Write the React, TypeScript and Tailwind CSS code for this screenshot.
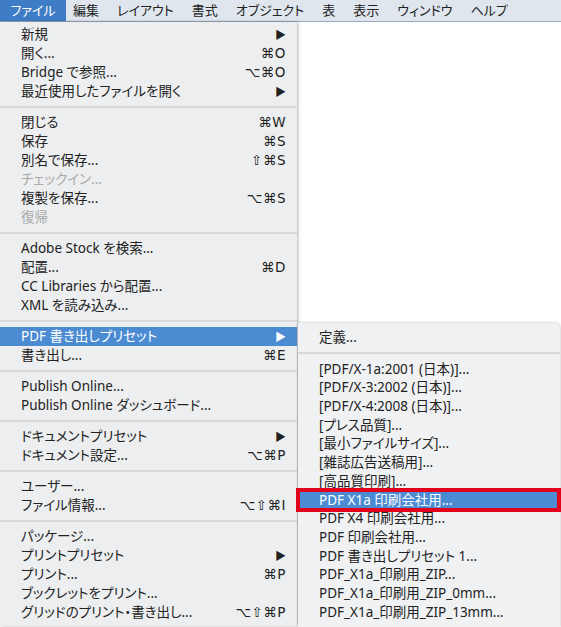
import React from 'react';

type Item = {
  label: string;
  shortcut?: string;
  submenu?: boolean;
  disabled?: boolean;
  active?: boolean;
};

const font = "font-['Noto_Sans','Noto_Sans_CJK_JP',sans-serif] [font-feature-settings:'palt']";

const menuBar = ['編集', 'レイアウト', '書式', 'オブジェクト', '表', '表示', 'ウィンドウ', 'ヘルプ'];

const fileMenu: Item[][] = [
  [
    { label: '新規', submenu: true },
    { label: '開く...', shortcut: '⌘O' },
    { label: 'Bridge で参照...', shortcut: '⌥⌘O' },
    { label: '最近使用したファイルを開く', submenu: true },
  ],
  [
    { label: '閉じる', shortcut: '⌘W' },
    { label: '保存', shortcut: '⌘S' },
    { label: '別名で保存...', shortcut: '⇧⌘S' },
    { label: 'チェックイン...', disabled: true },
    { label: '複製を保存...', shortcut: '⌥⌘S' },
    { label: '復帰', disabled: true },
  ],
  [
    { label: 'Adobe Stock を検索...' },
    { label: '配置...', shortcut: '⌘D' },
    { label: 'CC Libraries から配置...' },
    { label: 'XML を読み込み...' },
  ],
  [
    { label: 'PDF 書き出しプリセット', submenu: true, active: true },
    { label: '書き出し...', shortcut: '⌘E' },
  ],
  [{ label: 'Publish Online...' }, { label: 'Publish Online ダッシュボード...' }],
  [
    { label: 'ドキュメントプリセット', submenu: true },
    { label: 'ドキュメント設定...', shortcut: '⌥⌘P' },
  ],
  [{ label: 'ユーザー...' }, { label: 'ファイル情報...', shortcut: '⌥⇧⌘I' }],
  [
    { label: 'パッケージ...' },
    { label: 'プリントプリセット', submenu: true },
    { label: 'プリント...', shortcut: '⌘P' },
    { label: 'ブックレットをプリント...' },
    { label: 'グリッドのプリント・書き出し...', shortcut: '⌥⇧⌘P' },
  ],
];

const presets: Item[] = [
  { label: '[PDF/X-1a:2001 (日本)]...' },
  { label: '[PDF/X-3:2002 (日本)]...' },
  { label: '[PDF/X-4:2008 (日本)]...' },
  { label: '[プレス品質]...' },
  { label: '[最小ファイルサイズ]...' },
  { label: '[雑誌広告送稿用]...' },
  { label: '[高品質印刷]...' },
  { label: 'PDF X1a 印刷会社用...', active: true },
  { label: 'PDF X4 印刷会社用...' },
  { label: 'PDF 印刷会社用...' },
  { label: 'PDF 書き出しプリセット 1...' },
  { label: 'PDF_X1a_印刷用_ZIP...' },
  { label: 'PDF_X1a_印刷用_ZIP_0mm...' },
  { label: 'PDF_X1a_印刷用_ZIP_13mm...' },
];

function Row({ item, height }: { item: Item; height: string }) {
  const color = item.active ? 'bg-[#4b8bd2] text-white' : item.disabled ? 'text-[#a9a9a9]' : 'text-[#222]';
  return (
    <div className={`flex items-center justify-between pl-[21px] pr-[11px] ${height} ${color}`}>
      <span>{item.label}</span>
      {item.shortcut && (
        <span className="font-['DejaVu_Sans','Liberation_Sans',sans-serif] text-[13.5px] tracking-[0.5px]">
          {item.shortcut}
        </span>
      )}
      {item.submenu && <span className="text-[11px] leading-none">▶</span>}
    </div>
  );
}

function Separator({ height }: { height: string }) {
  return (
    <div className={`flex items-center ${height}`}>
      <div className="h-[2px] w-full bg-[#d8d9db]" />
    </div>
  );
}

export default function App() {
  return (
    <div className={`relative h-[627px] w-[561px] overflow-hidden bg-white text-[13.5px] ${font}`}>
      {/* Menu bar */}
      <div className="flex h-[22px] items-center border-b border-[#9aa8b8] bg-[#dfe6ee] text-[13px] text-[#222]">
        <div className="flex h-full w-[66px] items-center justify-center bg-[#3f7cc6] text-white">ファイル</div>
        <div className="ml-[7px] flex gap-[18px]">
          {menuBar.map((m) => (
            <span key={m}>{m}</span>
          ))}
        </div>
      </div>

      {/* File menu */}
      <div className="absolute left-0 top-[22px] w-[297px] bg-[#eceef0] pt-[3px] pb-[4px] shadow-[1px_0_3px_rgba(0,0,0,0.3)]">
        {fileMenu.map((group, gi) => (
          <div key={gi}>
            {gi > 0 && <Separator height="h-[12px]" />}
            {group.map((item) => (
              <Row key={item.label} item={item} height="h-[19px]" />
            ))}
          </div>
        ))}
      </div>

      {/* PDF preset submenu */}
      <div className="absolute left-[298px] top-[323px] w-[262px] rounded-tr-[5px] bg-[#eff1f3] pt-[4.6px] pb-[6px] shadow-[0_0_3px_rgba(0,0,0,0.3)]">
        <Row item={{ label: '定義...' }} height="h-[18.7px]" />
        <Separator height="h-[13.2px]" />
        {presets.map((item) => (
          <Row key={item.label} item={item} height="h-[18.7px]" />
        ))}
      </div>

      {/* Red annotation frame */}
      <div className="absolute left-[296px] top-[488px] h-[24px] w-[265px] border-4 border-[#e3001b]" />
    </div>
  );
}
